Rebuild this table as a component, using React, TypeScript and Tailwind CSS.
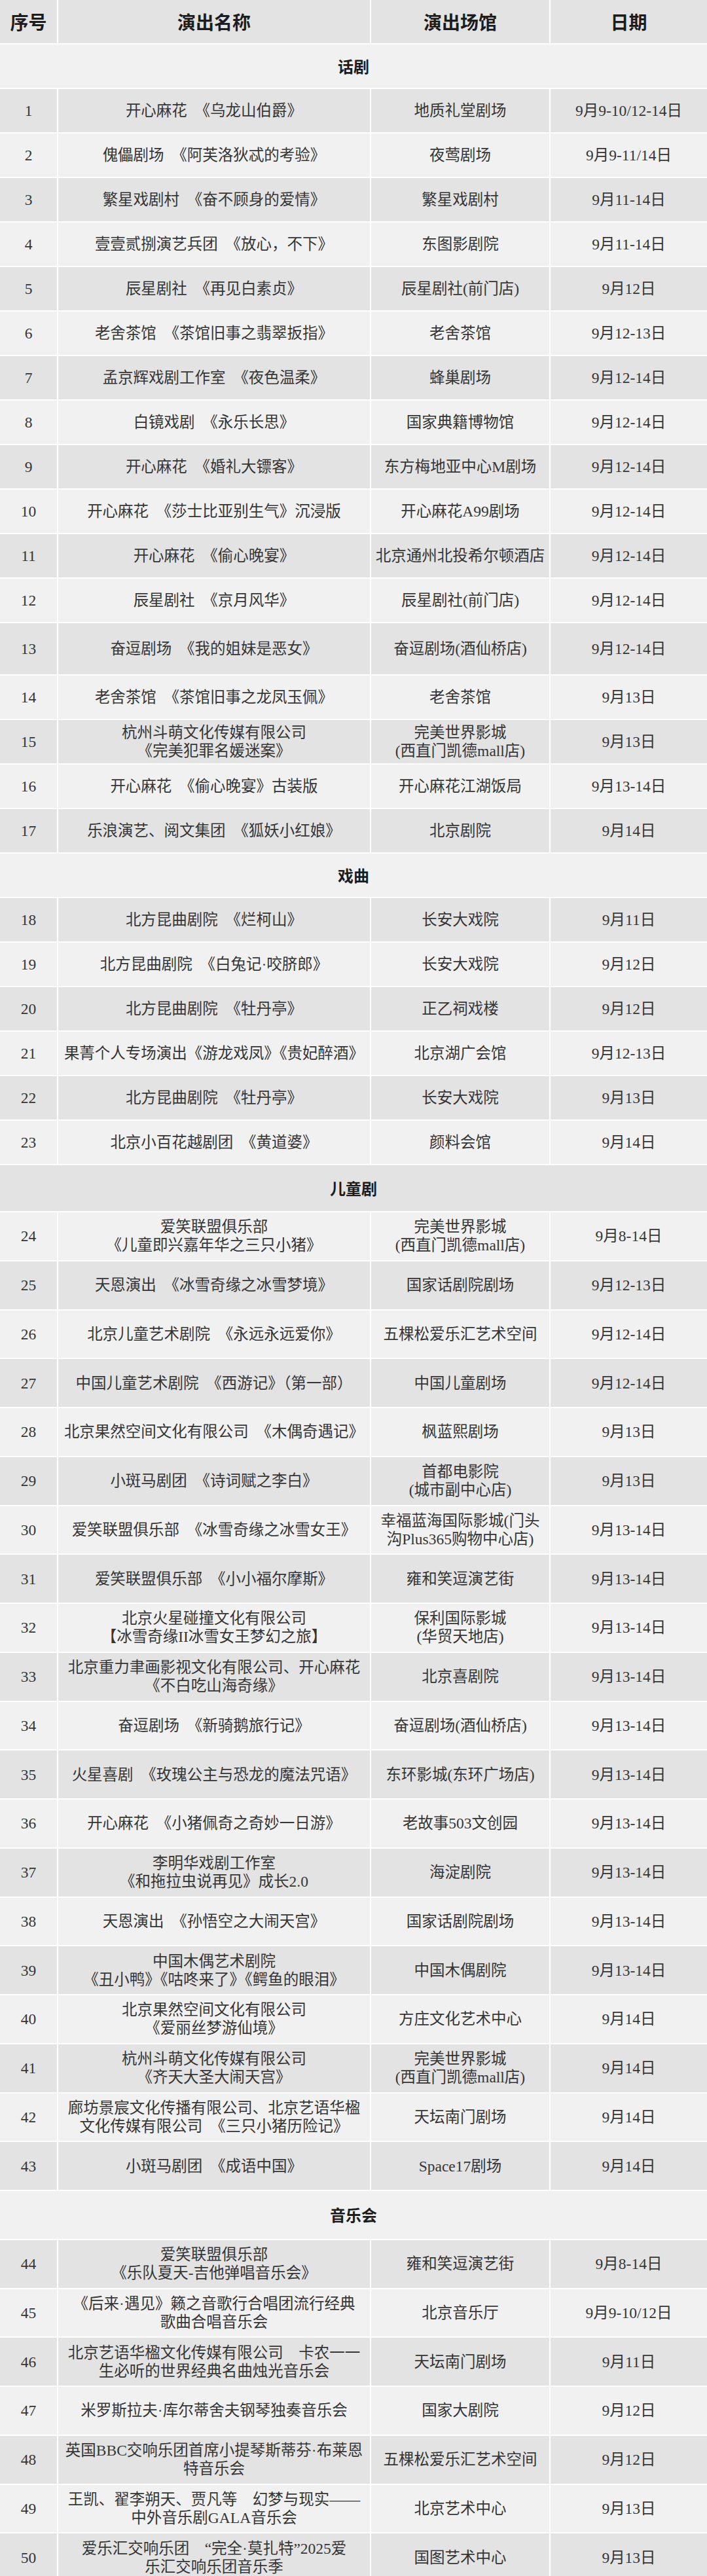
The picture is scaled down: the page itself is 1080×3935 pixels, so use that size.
import React from 'react'

type Show = {
  no: number
  name: string[]
  venue: string[]
  date: string
  h: string
}

type Section = { section: string; h: string }

type Item = Show | Section

// row heights read off the screenshot
const H = 'h-[66px]'
const H_TALL = 'h-[78px]'
const H_KID = 'h-[70px]'
const H2 = 'h-[72.75px]'

const S = '\u3000'

const items: Item[] = [
  { section: '话剧', h: H },
  { no: 1, name: [`开心麻花${S}《乌龙山伯爵》`], venue: ['地质礼堂剧场'], date: '9月9-10/12-14日', h: H },
  { no: 2, name: [`傀儡剧场${S}《阿芙洛狄忒的考验》`], venue: ['夜莺剧场'], date: '9月9-11/14日', h: H },
  { no: 3, name: [`繁星戏剧村${S}《奋不顾身的爱情》`], venue: ['繁星戏剧村'], date: '9月11-14日', h: H },
  { no: 4, name: [`壹壹贰捌演艺兵团${S}《放心，不下》`], venue: ['东图影剧院'], date: '9月11-14日', h: H },
  { no: 5, name: [`辰星剧社${S}《再见白素贞》`], venue: ['辰星剧社(前门店)'], date: '9月12日', h: H },
  { no: 6, name: [`老舍茶馆${S}《茶馆旧事之翡翠扳指》`], venue: ['老舍茶馆'], date: '9月12-13日', h: H },
  { no: 7, name: [`孟京辉戏剧工作室${S}《夜色温柔》`], venue: ['蜂巢剧场'], date: '9月12-14日', h: H },
  { no: 8, name: [`白镜戏剧${S}《永乐长思》`], venue: ['国家典籍博物馆'], date: '9月12-14日', h: H },
  { no: 9, name: [`开心麻花${S}《婚礼大镖客》`], venue: ['东方梅地亚中心M剧场'], date: '9月12-14日', h: H },
  { no: 10, name: [`开心麻花${S}《莎士比亚别生气》沉浸版`], venue: ['开心麻花A99剧场'], date: '9月12-14日', h: H },
  { no: 11, name: [`开心麻花${S}《偷心晚宴》`], venue: ['北京通州北投希尔顿酒店'], date: '9月12-14日', h: H },
  { no: 12, name: [`辰星剧社${S}《京月风华》`], venue: ['辰星剧社(前门店)'], date: '9月12-14日', h: H },
  { no: 13, name: [`奋逗剧场${S}《我的姐妹是恶女》`], venue: ['奋逗剧场(酒仙桥店)'], date: '9月12-14日', h: H_TALL },
  { no: 14, name: [`老舍茶馆${S}《茶馆旧事之龙凤玉佩》`], venue: ['老舍茶馆'], date: '9月13日', h: H },
  { no: 15, name: ['杭州斗萌文化传媒有限公司', '《完美犯罪名媛迷案》'], venue: ['完美世界影城', '(西直门凯德mall店)'], date: '9月13日', h: H },
  { no: 16, name: [`开心麻花${S}《偷心晚宴》古装版`], venue: ['开心麻花江湖饭局'], date: '9月13-14日', h: H },
  { no: 17, name: [`乐浪演艺、阅文集团${S}《狐妖小红娘》`], venue: ['北京剧院'], date: '9月14日', h: H },

  { section: '戏曲', h: H },
  { no: 18, name: [`北方昆曲剧院${S}《烂柯山》`], venue: ['长安大戏院'], date: '9月11日', h: H },
  { no: 19, name: [`北方昆曲剧院${S}《白兔记·咬脐郎》`], venue: ['长安大戏院'], date: '9月12日', h: H },
  { no: 20, name: [`北方昆曲剧院${S}《牡丹亭》`], venue: ['正乙祠戏楼'], date: '9月12日', h: H },
  { no: 21, name: ['果菁个人专场演出《游龙戏凤》《贵妃醉酒》'], venue: ['北京湖广会馆'], date: '9月12-13日', h: H },
  { no: 22, name: [`北方昆曲剧院${S}《牡丹亭》`], venue: ['长安大戏院'], date: '9月13日', h: H },
  { no: 23, name: [`北京小百花越剧团${S}《黄道婆》`], venue: ['颜料会馆'], date: '9月14日', h: H },

  { section: '儿童剧', h: H_KID },
  { no: 24, name: ['爱笑联盟俱乐部', '《儿童即兴嘉年华之三只小猪》'], venue: ['完美世界影城', '(西直门凯德mall店)'], date: '9月8-14日', h: H2 },
  { no: 25, name: [`天恩演出${S}《冰雪奇缘之冰雪梦境》`], venue: ['国家话剧院剧场'], date: '9月12-13日', h: H2 },
  { no: 26, name: [`北京儿童艺术剧院${S}《永远永远爱你》`], venue: ['五棵松爱乐汇艺术空间'], date: '9月12-14日', h: H2 },
  { no: 27, name: [`中国儿童艺术剧院${S}《西游记》（第一部）`], venue: ['中国儿童剧场'], date: '9月12-14日', h: H2 },
  { no: 28, name: [`北京果然空间文化有限公司${S}《木偶奇遇记》`], venue: ['枫蓝熙剧场'], date: '9月13日', h: H2 },
  { no: 29, name: [`小斑马剧团${S}《诗词赋之李白》`], venue: ['首都电影院', '(城市副中心店)'], date: '9月13日', h: H2 },
  { no: 30, name: [`爱笑联盟俱乐部${S}《冰雪奇缘之冰雪女王》`], venue: ['幸福蓝海国际影城(门头', '沟Plus365购物中心店)'], date: '9月13-14日', h: H2 },
  { no: 31, name: [`爱笑联盟俱乐部${S}《小小福尔摩斯》`], venue: ['雍和笑逗演艺街'], date: '9月13-14日', h: H2 },
  { no: 32, name: ['北京火星碰撞文化有限公司', '【冰雪奇缘II冰雪女王梦幻之旅】'], venue: ['保利国际影城', '(华贸天地店)'], date: '9月13-14日', h: H2 },
  { no: 33, name: ['北京重力聿画影视文化有限公司、开心麻花', '《不白吃山海奇缘》'], venue: ['北京喜剧院'], date: '9月13-14日', h: H2 },
  { no: 34, name: [`奋逗剧场${S}《新骑鹅旅行记》`], venue: ['奋逗剧场(酒仙桥店)'], date: '9月13-14日', h: H2 },
  { no: 35, name: [`火星喜剧${S}《玫瑰公主与恐龙的魔法咒语》`], venue: ['东环影城(东环广场店)'], date: '9月13-14日', h: H2 },
  { no: 36, name: [`开心麻花${S}《小猪佩奇之奇妙一日游》`], venue: ['老故事503文创园'], date: '9月13-14日', h: H2 },
  { no: 37, name: ['李明华戏剧工作室', '《和拖拉虫说再见》成长2.0'], venue: ['海淀剧院'], date: '9月13-14日', h: H2 },
  { no: 38, name: [`天恩演出${S}《孙悟空之大闹天宫》`], venue: ['国家话剧院剧场'], date: '9月13-14日', h: H2 },
  { no: 39, name: ['中国木偶艺术剧院', '《丑小鸭》《咕咚来了》《鳄鱼的眼泪》'], venue: ['中国木偶剧院'], date: '9月13-14日', h: H2 },
  { no: 40, name: ['北京果然空间文化有限公司', '《爱丽丝梦游仙境》'], venue: ['方庄文化艺术中心'], date: '9月14日', h: H2 },
  { no: 41, name: ['杭州斗萌文化传媒有限公司', '《齐天大圣大闹天宫》'], venue: ['完美世界影城', '(西直门凯德mall店)'], date: '9月14日', h: H2 },
  { no: 42, name: ['廊坊景宸文化传播有限公司、北京艺语华楹', `文化传媒有限公司${S}《三只小猪历险记》`], venue: ['天坛南门剧场'], date: '9月14日', h: H2 },
  { no: 43, name: [`小斑马剧团${S}《成语中国》`], venue: ['Space17剧场'], date: '9月14日', h: H2 },

  { section: '音乐会', h: H2 },
  { no: 44, name: ['爱笑联盟俱乐部', '《乐队夏天-吉他弹唱音乐会》'], venue: ['雍和笑逗演艺街'], date: '9月8-14日', h: H2 },
  { no: 45, name: ['《后来·遇见》籁之音歌行合唱团流行经典', '歌曲合唱音乐会'], venue: ['北京音乐厅'], date: '9月9-10/12日', h: H2 },
  { no: 46, name: [`北京艺语华楹文化传媒有限公司${S}卡农一一`, '生必听的世界经典名曲烛光音乐会'], venue: ['天坛南门剧场'], date: '9月11日', h: H2 },
  { no: 47, name: ['米罗斯拉夫·库尔蒂舍夫钢琴独奏音乐会'], venue: ['国家大剧院'], date: '9月12日', h: H2 },
  { no: 48, name: ['英国BBC交响乐团首席小提琴斯蒂芬·布莱恩', '特音乐会'], venue: ['五棵松爱乐汇艺术空间'], date: '9月12日', h: H2 },
  { no: 49, name: [`王凯、翟李朔天、贾凡等${S}幻梦与现实——`, '中外音乐剧GALA音乐会'], venue: ['北京艺术中心'], date: '9月13日', h: H2 },
  { no: 50, name: [`爱乐汇交响乐团${S}“完全·莫扎特”2025爱`, '乐汇交响乐团音乐季'], venue: ['国图艺术中心'], date: '9月13日', h: H2 },
]

const GRID = 'grid grid-cols-[87px_476px_272px_1fr] gap-x-[2px]'

function Lines({ lines }: { lines: string[] }) {
  return (
    <div className="flex flex-col items-center">
      {lines.map((l, i) => (
        <span key={i} className="whitespace-nowrap">
          {l}
        </span>
      ))}
    </div>
  )
}

function Cell({ bg, children }: { bg: string; children: React.ReactNode }) {
  return (
    <div className={`${bg} flex items-center justify-center text-center`}>
      {children}
    </div>
  )
}

export default function App() {
  return (
    <div className="w-[1080px] bg-white flex flex-col gap-y-[2px] font-['Liberation_Serif','Noto_Sans_CJK_SC',serif] text-[23.5px] leading-[28px] text-[#353535]">
      {/* header */}
      <div className={`${GRID} h-[66px] font-['Noto_Sans_CJK_SC',sans-serif] text-[28px] font-bold text-[#1c1c1c]`}>
        <Cell bg="bg-[#e3e3e3]">序号</Cell>
        <Cell bg="bg-[#e3e3e3]">演出名称</Cell>
        <Cell bg="bg-[#e3e3e3]">演出场馆</Cell>
        <Cell bg="bg-[#e3e3e3]">日期</Cell>
      </div>

      {items.map((it, i) => {
        // header is row 0 (dark), so the first item is light
        const bg = i % 2 === 0 ? 'bg-[#f1f1f1]' : 'bg-[#e3e3e3]'
        if ('section' in it) {
          return (
            <div
              key={it.section}
              className={`${it.h} ${bg} flex items-center justify-center font-['Noto_Sans_CJK_SC',sans-serif] text-[24px] font-bold text-[#1c1c1c]`}
            >
              {it.section}
            </div>
          )
        }
        return (
          <div key={it.no} className={`${GRID} ${it.h}`}>
            <Cell bg={bg}>{it.no}</Cell>
            <Cell bg={bg}>
              <Lines lines={it.name} />
            </Cell>
            <Cell bg={bg}>
              <Lines lines={it.venue} />
            </Cell>
            <Cell bg={bg}>{it.date}</Cell>
          </div>
        )
      })}
    </div>
  )
}
